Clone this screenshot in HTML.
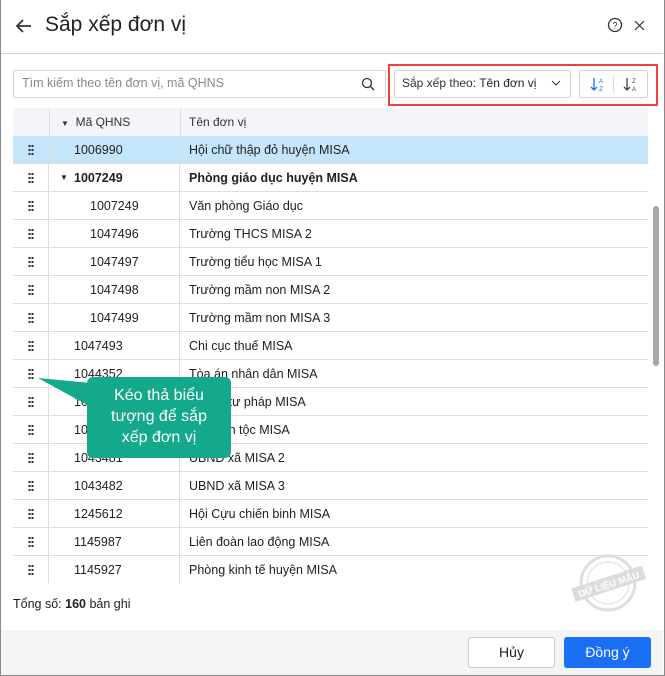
<!DOCTYPE html>
<html><head><meta charset="utf-8"><style>
*{box-sizing:border-box;margin:0;padding:0}
body{width:665px;height:676px;background:#fff;font-family:"Liberation Sans",sans-serif;color:#212121;position:relative;overflow:hidden;font-size:12.5px}
.dlg{position:absolute;left:0;top:0;width:665px;height:676px;border:1px solid #8a8a8a;border-top:0}
.a{position:absolute}
.row{position:absolute;left:13px;width:635px;height:28px;border-bottom:1px solid #ddd}
.row .d{position:absolute;left:0;top:0;width:36px;height:27px;border-right:1px solid #ddd}
.row .c{position:absolute;left:36px;top:0;width:131px;height:27px;border-right:1px solid #ddd}
.row span{position:absolute;top:7px}
.dots{position:absolute;left:15px;top:8px;width:6px;height:12px;background:radial-gradient(circle,#333 1.1px,transparent 1.3px) 0 0/3px 4px}
</style></head><body>
<div class="dlg"></div>
<svg class="a" style="left:14px;top:16px" width="20" height="20" viewBox="0 0 20 20"><path d="M17 10H3M9 4L3 10l6 6" stroke="#333" stroke-width="1.8" fill="none"/></svg>
<div class="a" style="left:45px;top:13px;font-size:21px;color:#212121">Sắp xếp đơn vị</div>
<svg class="a" style="left:607px;top:17px" width="16" height="16" viewBox="0 0 16 16"><circle cx="8" cy="8" r="6.5" stroke="#333" stroke-width="1.3" fill="none"/><text x="8" y="11.5" font-size="9" text-anchor="middle" font-family="Liberation Sans" fill="#333">?</text></svg>
<svg class="a" style="left:634px;top:20px" width="11" height="11"><path d="M1 1L10 10M10 1L1 10" stroke="#333" stroke-width="1.2"/></svg>
<div class="a" style="left:1px;top:53px;width:662px;height:1px;background:#d0d0d6"></div>
<div class="a" style="left:13px;top:70px;width:373px;height:28px;border:1px solid #d6d6d6;border-radius:2px"></div>
<div class="a" style="left:22px;top:76px;color:#888">Tìm kiếm theo tên đơn vị, mã QHNS</div>
<svg class="a" style="left:361px;top:77px" width="14" height="14"><circle cx="6" cy="6" r="4.5" stroke="#333" stroke-width="1.3" fill="none"/><path d="M9.5 9.5L13 13" stroke="#333" stroke-width="1.3"/></svg>
<div class="a" style="left:388px;top:64px;width:270px;height:42px;border:2px solid #f04040"></div>
<div class="a" style="left:394px;top:70px;width:177px;height:28px;border:1px solid #d6d6d6;border-radius:2px"></div>
<div class="a" style="left:402px;top:76px;color:#333;font-size:12px">Sắp xếp theo: <span style="color:#212121">Tên đơn vị</span></div>
<svg class="a" style="left:551px;top:80px" width="10" height="6"><path d="M1 1l4 4 4-4" stroke="#333" fill="none"/></svg>
<div class="a" style="left:579px;top:70px;width:69px;height:28px;border:1px solid #d6d6d6;border-radius:2px"></div>
<div class="a" style="left:613px;top:75px;width:1px;height:18px;background:#ddd"></div>
<svg class="a" style="left:590px;top:74px" width="16" height="20"><path d="M4 4v12M1 13l3 3 3-3" stroke="#1a6ef0" stroke-width="1.3" fill="none"/><text x="11" y="9" font-size="6" fill="#1a6ef0" font-family="Liberation Sans" text-anchor="middle">A</text><text x="11" y="17" font-size="6" fill="#1a6ef0" font-family="Liberation Sans" text-anchor="middle">Z</text></svg>
<svg class="a" style="left:623px;top:74px" width="16" height="20"><path d="M4 4v12M1 13l3 3 3-3" stroke="#444" stroke-width="1.3" fill="none"/><text x="11" y="9" font-size="6" fill="#444" font-family="Liberation Sans" text-anchor="middle">Z</text><text x="11" y="17" font-size="6" fill="#444" font-family="Liberation Sans" text-anchor="middle">A</text></svg>
<div class="a" style="left:13px;top:108px;width:635px;height:28px;background:#f4f5f8"></div>
<div class="a" style="left:49px;top:108px;width:1px;height:28px;background:#ddd"></div>
<div class="a" style="left:180px;top:108px;width:1px;height:28px;background:#ddd"></div>
<div class="a" style="left:61px;top:115px;font-size:12px;color:#333"><span style="font-size:8px">▼</span>&nbsp; Mã QHNS</div>
<div class="a" style="left:189px;top:115px;font-size:12px;color:#333">Tên đơn vị</div>
<div class="row" style="top:136px;background:#c5e5fb"><div class="d"><i class="dots"></i></div><div class="c"></div><span style="left:61px">1006990</span><span style="left:176px">Hội chữ thập đỏ huyện MISA</span></div>
<div class="row" style="top:164px;font-weight:bold"><div class="d"><i class="dots"></i></div><div class="c"></div><span style="left:47px;font-size:8px;top:9px">▼</span><span style="left:61px">1007249</span><span style="left:176px">Phòng giáo dục huyện MISA</span></div>
<div class="row" style="top:192px"><div class="d"><i class="dots"></i></div><div class="c"></div><span style="left:77px">1007249</span><span style="left:176px">Văn phòng Giáo dục</span></div>
<div class="row" style="top:220px"><div class="d"><i class="dots"></i></div><div class="c"></div><span style="left:77px">1047496</span><span style="left:176px">Trường THCS MISA 2</span></div>
<div class="row" style="top:248px"><div class="d"><i class="dots"></i></div><div class="c"></div><span style="left:77px">1047497</span><span style="left:176px">Trường tiểu học MISA 1</span></div>
<div class="row" style="top:276px"><div class="d"><i class="dots"></i></div><div class="c"></div><span style="left:77px">1047498</span><span style="left:176px">Trường mầm non MISA 2</span></div>
<div class="row" style="top:304px"><div class="d"><i class="dots"></i></div><div class="c"></div><span style="left:77px">1047499</span><span style="left:176px">Trường mầm non MISA 3</span></div>
<div class="row" style="top:332px"><div class="d"><i class="dots"></i></div><div class="c"></div><span style="left:61px">1047493</span><span style="left:176px">Chi cục thuế MISA</span></div>
<div class="row" style="top:360px"><div class="d"><i class="dots"></i></div><div class="c"></div><span style="left:61px">1044352</span><span style="left:176px">Tòa án nhân dân MISA</span></div>
<div class="row" style="top:388px"><div class="d"><i class="dots"></i></div><div class="c"></div><span style="left:61px">1044353</span><span style="left:176px">Phòng tư pháp MISA</span></div>
<div class="row" style="top:416px"><div class="d"><i class="dots"></i></div><div class="c"></div><span style="left:61px">1044354</span><span style="left:176px">Ban dân tộc MISA</span></div>
<div class="row" style="top:444px"><div class="d"><i class="dots"></i></div><div class="c"></div><span style="left:61px">1043481</span><span style="left:176px">UBND xã MISA 2</span></div>
<div class="row" style="top:472px"><div class="d"><i class="dots"></i></div><div class="c"></div><span style="left:61px">1043482</span><span style="left:176px">UBND xã MISA 3</span></div>
<div class="row" style="top:500px"><div class="d"><i class="dots"></i></div><div class="c"></div><span style="left:61px">1245612</span><span style="left:176px">Hội Cựu chiến binh MISA</span></div>
<div class="row" style="top:528px"><div class="d"><i class="dots"></i></div><div class="c"></div><span style="left:61px">1145987</span><span style="left:176px">Liên đoàn lao động MISA</span></div>
<div class="row" style="top:556px;height:27px;border-bottom:0"><div class="d"></div><div class="c"></div><i class="dots"></i><span style="left:61px">1145927</span><span style="left:176px">Phòng kinh tế huyện MISA</span></div>
<div class="a" style="left:653px;top:206px;width:6px;height:160px;background:#a8a8a8;border-radius:3px"></div>
<svg class="a" style="left:36px;top:375px" width="60" height="40"><path d="M2 3L55 8L55 32Z" fill="#13a98a"/></svg>
<div class="a" style="left:87px;top:377px;width:144px;height:81px;background:#13a98a;border-radius:6px;color:#fff;font-size:16px;text-align:center;line-height:21px;padding-top:8px">Kéo thả biểu<br>tượng để sắp<br>xếp đơn vị</div>
<svg class="a" style="left:568px;top:548px" width="80" height="70" opacity="0.8"><circle cx="40" cy="35" r="27" stroke="#d8d8d8" stroke-width="3" fill="none"/><circle cx="40" cy="35" r="21" stroke="#e0e0e0" stroke-width="1.5" fill="none"/><g transform="rotate(-18 40 37)"><rect x="4" y="29" width="74" height="14" fill="#d4d4d4"/><text x="41" y="40" font-size="9.5" font-weight="bold" fill="#fff" text-anchor="middle" font-family="Liberation Sans">DỮ LIỆU MẪU</text></g></svg>
<div class="a" style="left:13px;top:597px;color:#212121">Tổng số: <b>160</b> bản ghi</div>
<div class="a" style="left:1px;top:630px;width:662px;height:45px;background:#f3f4f6"></div>
<div class="a" style="left:468px;top:637px;width:87px;height:31px;border:1px solid #ccc;background:#fff;border-radius:3px;text-align:center;line-height:29px;font-size:14px">Hủy</div>
<div class="a" style="left:564px;top:637px;width:87px;height:31px;background:#1a6ef5;color:#fff;border-radius:3px;text-align:center;line-height:31px;font-size:14px">Đồng ý</div>
</body></html>
